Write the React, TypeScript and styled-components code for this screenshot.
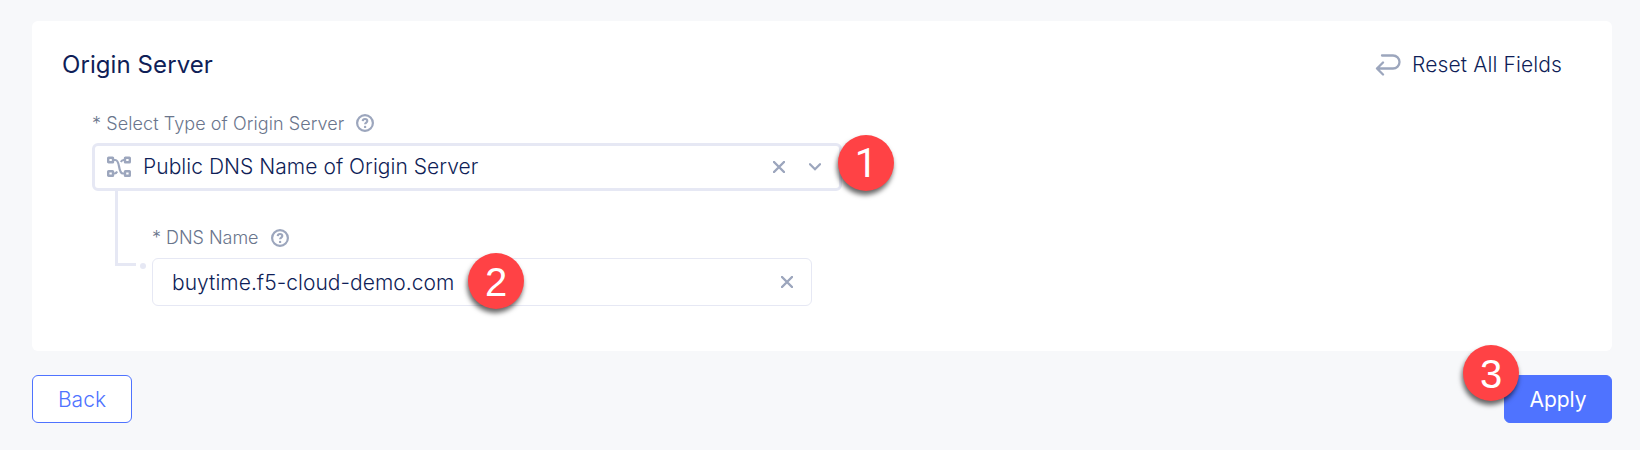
import React from 'react';
import styled, { createGlobalStyle } from 'styled-components';

const GlobalStyle = createGlobalStyle`
  *, *::before, *::after { box-sizing: border-box; }
  body {
    margin: 0;
    background: #f7f8fa;
    font-family: Inter, 'Liberation Sans', sans-serif;
    color: #0f1e57;
  }
  svg { display: block; flex: none; }
`;

const Page = styled.main`
  height: 450px;
  padding: 21px 28px 0 32px;
  overflow: hidden;
`;

const Card = styled.section`
  height: 330px;
  padding: 28px 50px 0 30px;
  background: #fff;
  border-radius: 6px;
`;

const CardHeader = styled.header`
  display: flex;
  align-items: center;
  justify-content: space-between;
  height: 32px;
`;

const Title = styled.h2`
  margin: 0;
  font-size: 24px;
  line-height: 32px;
  font-weight: 400;
  letter-spacing: 0.08px;
`;

const ResetButton = styled.button`
  display: flex;
  align-items: center;
  gap: 11px;
  padding: 0;
  border: 0;
  background: none;
  color: inherit;
  font: 360 21px/32px Inter, sans-serif;
  letter-spacing: 0.12px;
`;

const Form = styled.div`
  padding: 30px 0 0 30px;
`;

const Label = styled.label<{ $spacing: number }>`
  display: flex;
  align-items: center;
  gap: 12px;
  height: 24px;
  margin-bottom: 8px;
  font-size: 18px;
  font-weight: 360;
  line-height: 24px;
  letter-spacing: ${({ $spacing }) => $spacing}px;
  color: #6a758c;
`;

const LabelText = styled.span<{ $drop?: boolean }>`
  padding-top: ${({ $drop }) => ($drop ? 2 : 0)}px;
`;

const Field = styled.div<{ $strong?: boolean }>`
  position: relative;
  display: flex;
  align-items: center;
  width: ${({ $strong }) => ($strong ? 750 : 660)}px;
  height: 48px;
  padding: ${({ $strong }) => ($strong ? '0 18px 0 12px' : '0 18px 0 19px')};
  border: ${({ $strong }) => ($strong ? 3 : 1)}px solid #e6e8f4;
  border-radius: 6px;
  background: #fff;
`;

const Value = styled.span<{ $drop?: boolean }>`
  flex: 1;
  padding-top: ${({ $drop }) => ($drop ? 2 : 0)}px;
  font-size: 21px;
  font-weight: 360;
  line-height: 30px;
  letter-spacing: 0.04px;
  white-space: nowrap;
`;

const TypeIcon = styled.span`
  margin-right: 12px;
`;

const FieldActions = styled.span`
  display: flex;
  align-items: center;
  gap: 24px;
`;

const Nested = styled.div`
  display: flex;
  padding-left: 23px;
`;

const Branch = styled.div`
  display: flex;
  align-items: flex-end;
  gap: 4px;
  width: 37px;
  height: 78px;
`;

const Elbow = styled.span`
  width: 21px;
  height: 75px;
  margin-bottom: 3px;
  border: solid #e6e8f4;
  border-width: 0 0 3px 3px;
`;

const Dot = styled.span`
  width: 6px;
  height: 6px;
  border-radius: 50%;
  background: #e6e8f4;
`;

const NestedField = styled.div`
  padding-top: 35px;
`;

const Footer = styled.footer`
  display: flex;
  justify-content: space-between;
  padding-top: 24px;
`;

const Button = styled.button<{ $primary?: boolean }>`
  position: relative;
  width: ${({ $primary }) => ($primary ? 108 : 100)}px;
  height: 48px;
  padding: 2px 0 0;
  border: 1px solid #4f73ff;
  border-radius: 6px;
  background: ${({ $primary }) => ($primary ? '#4f73ff' : '#fff')};
  color: ${({ $primary }) => ($primary ? '#fff' : '#4f73ff')};
  font: ${({ $primary }) => ($primary ? 400 : 350)} 21px/44px Inter, sans-serif;
  letter-spacing: 0;
`;

const Step = styled.span<{ $left: number; $top: number; $font?: string }>`
  position: absolute;
  left: ${({ $left }) => $left}px;
  top: ${({ $top }) => $top}px;
  width: 56px;
  height: 56px;
  border-radius: 50%;
  background: #ff4245;
  box-shadow: -1px 4px 5px rgba(0, 0, 0, 0.6);
  color: #fff;
  font: 400 40px/58px ${({ $font }) => $font ?? "'Liberation Sans'"}, sans-serif;
  letter-spacing: 0;
  text-align: center;
`;

const gray = '#9ca6bd';

const HelpIcon = () => (
  <svg width="18" height="18" viewBox="0 0 18 18" fill="none" stroke={gray}>
    <circle cx="9" cy="9" r="7.9" strokeWidth="2.2" />
    <path d="M6.700 7.100C6.800 5.700 7.800 5 9 5c1.300 0 2.300.8 2.300 2 0 1.500-2.200 1.700-2.200 3.300" strokeWidth="2.1" />
    <circle cx="9.1" cy="12.9" r="1.2" fill={gray} stroke="none" />
  </svg>
);

const CloseIcon = () => (
  <svg width="12" height="12" viewBox="0 0 12 12" stroke={gray} strokeWidth="2.4" strokeLinecap="round">
    <path d="M1 1l10 10M11 1L1 11" />
  </svg>
);

const ChevronIcon = () => (
  <svg width="12" height="12" viewBox="0 0 12 12" fill="none" stroke={gray} strokeWidth="2.3" strokeLinecap="round">
    <path d="M1 3.200l5 5 5-5" />
  </svg>
);

const NodesIcon = () => (
  <svg width="24" height="22" viewBox="0 0 24 22" fill="none" stroke={gray} strokeWidth="2.4">
    <rect x="1.2" y="1.7" width="4.8" height="4.6" rx=".4" />
    <rect x="18" y="1.7" width="4.8" height="4.6" rx=".4" />
    <rect x="1.2" y="15.2" width="4.8" height="4.6" rx=".4" />
    <rect x="18" y="15.2" width="4.8" height="4.6" rx=".4" />
    <path d="M6 4h2.200c5.600 0 2.200 13.500 7.800 13.500H18M18 4h-1.500c-1.300 0-2 .7-2.600 2M6 17.500h1.500c1.300 0 2-.7 2.600-2" strokeWidth="2.2" />
  </svg>
);

const ResetIcon = () => (
  <svg width="26" height="22" viewBox="0 0 26 22" fill="none" stroke={gray} strokeWidth="2.3" strokeLinecap="round" strokeLinejoin="round">
    <path d="M7 1.500h11a6.500 6.500 0 0 1 0 13H2M8 8.500l-6 6 6 6" />
  </svg>
);

export default function App() {
  return (
    <Page>
      <GlobalStyle />
      <Card>
        <CardHeader>
          <Title>Origin Server</Title>
          <ResetButton>
            <ResetIcon />
            Reset All Fields
          </ResetButton>
        </CardHeader>
        <Form>
          <Label $spacing={0.08}>
            <LabelText $drop>* Select Type of Origin Server</LabelText>
            <HelpIcon />
          </Label>
          <Field $strong>
            <TypeIcon><NodesIcon /></TypeIcon>
            <Value>Public DNS Name of Origin Server</Value>
            <FieldActions>
              <CloseIcon />
              <ChevronIcon />
            </FieldActions>
            <Step $left={743} $top={-11} $font="Roboto">1</Step>
          </Field>
          <Nested>
            <Branch>
              <Elbow />
              <Dot />
            </Branch>
            <NestedField>
              <Label $spacing={-0.03}>
                <LabelText>* DNS Name</LabelText>
                <HelpIcon />
              </Label>
              <Field>
                <Value $drop>buytime.f5-cloud-demo.com</Value>
                <CloseIcon />
                <Step $left={315} $top={-6}>2</Step>
              </Field>
            </NestedField>
          </Nested>
        </Form>
      </Card>
      <Footer>
        <Button>Back</Button>
        <Button $primary>
          Apply
          <Step $left={-42} $top={-31}>3</Step>
        </Button>
      </Footer>
    </Page>
  );
}
